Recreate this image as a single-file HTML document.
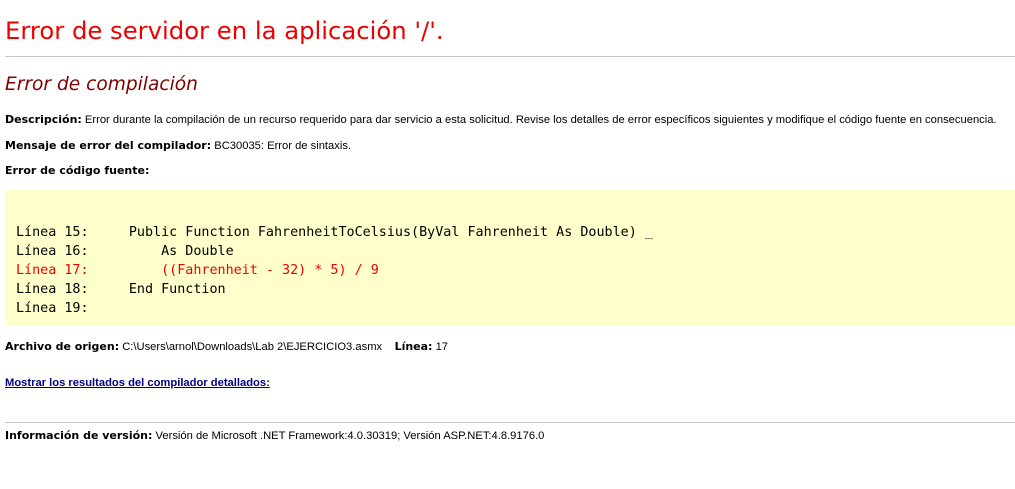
<!DOCTYPE html>
<html><head><meta charset="utf-8"><style>
body{margin:0;background:#fff;width:1015px;height:489px;position:relative;overflow:hidden;font-family:"Liberation Sans",Arial,sans-serif;font-size:11.2px;color:#000}
.a{position:absolute;white-space:nowrap}
b{font-family:"DejaVu Sans",sans-serif;font-weight:bold;font-size:11px}
h1{position:absolute;left:5px;top:16px;margin:0;font-family:"DejaVu Sans",sans-serif;font-weight:normal;font-size:24.3px;color:#e00;white-space:nowrap}
h2{position:absolute;left:5px;top:74px;margin:0;font-family:"DejaVu Sans",sans-serif;font-weight:normal;font-style:italic;font-size:18.6px;color:#800000;white-space:nowrap}
.hr{position:absolute;left:5px;width:1010px;height:1px;background:#c8c8c8}
.box{position:absolute;left:5px;top:190px;width:1010px;height:135px;background:#ffffcc}
pre{position:absolute;left:16px;top:223px;margin:0;font-family:"DejaVu Sans Mono",monospace;font-size:13.4px;line-height:19px}
.r{color:#e00}
a{color:#000080;font-weight:bold}
</style></head><body>
<h1>Error de servidor en la aplicación '/'.</h1>
<div class="hr" style="top:56px"></div>
<h2>Error de compilación</h2>
<div class="a" style="left:5px;top:113px"><b>Descripción:</b> Error durante la compilación de un recurso requerido para dar servicio a esta solicitud. Revise los detalles de error específicos siguientes y modifique el código fuente en consecuencia.</div>
<div class="a" style="left:5px;top:139px"><b>Mensaje de error del compilador:</b> BC30035: Error de sintaxis.</div>
<div class="a" style="left:5px;top:164px"><b>Error de código fuente:</b></div>
<div class="box"></div>
<pre>Línea 15:     Public Function FahrenheitToCelsius(ByVal Fahrenheit As Double) _
Línea 16:         As Double
<span class="r">Línea 17:         ((Fahrenheit - 32) * 5) / 9</span>
Línea 18:     End Function
Línea 19:</pre>
<div class="a" style="left:5px;top:340px"><b>Archivo de origen:</b> C:\Users\arnol\Downloads\Lab 2\EJERCICIO3.asmx &nbsp;&nbsp; <b>Línea:</b> 17</div>
<div class="a" style="left:5px;top:377px"><a href="#">Mostrar los resultados del compilador detallados:</a></div>
<div class="hr" style="top:422px"></div>
<div class="a" style="left:5px;top:429px"><b>Información de versión:</b> Versión de Microsoft .NET Framework:4.0.30319; Versión ASP.NET:4.8.9176.0</div>
</body></html>
